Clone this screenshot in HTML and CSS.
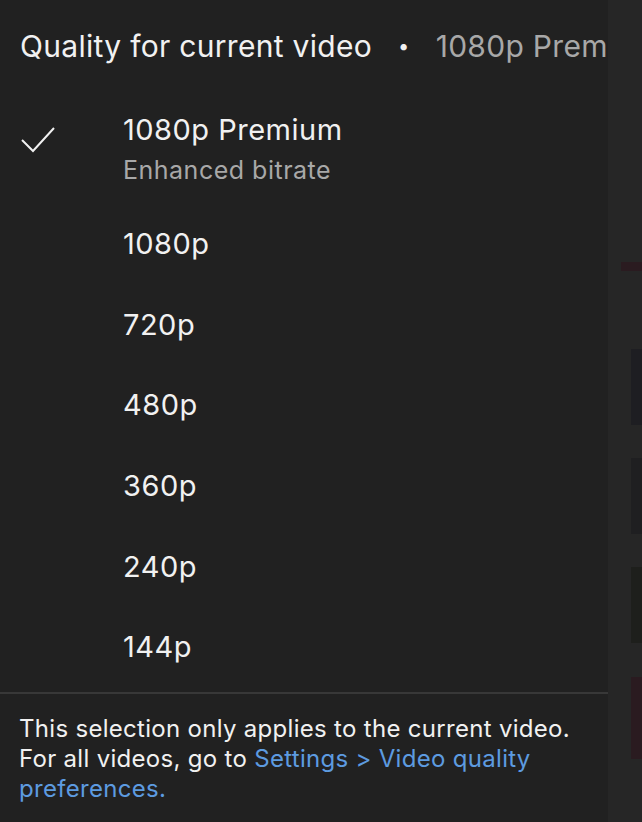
FILE: index.html
```html
<!DOCTYPE html>
<html lang="en">
<head>
    <meta charset="UTF-8">
    <meta name="viewport" content="width=device-width, initial-scale=1.0">
    <title>Quality for current video</title>
    <link rel="stylesheet" href="styles.css">
</head>
<body>

    <div class="sheet">
        <div class="header">
            <span class="header-title">Quality for current video</span>
            <span class="header-dot">&bull;</span>
            <span class="header-current">1080p Premium</span>
        </div>

        <ul class="options">
            <li class="option option-premium">
                <svg class="check" viewBox="0 0 34 28" width="34" height="28">
                    <path d="M1 14 L12 25 L33 2" fill="none" stroke="#f1f1f1" stroke-width="2"/>
                </svg>
                <div class="option-text">
                    <span class="option-label">1080p Premium</span>
                    <span class="option-sub">Enhanced bitrate</span>
                </div>
            </li>
            <li class="option"><span class="option-label">1080p</span></li>
            <li class="option"><span class="option-label">720p</span></li>
            <li class="option"><span class="option-label">480p</span></li>
            <li class="option"><span class="option-label">360p</span></li>
            <li class="option"><span class="option-label">240p</span></li>
            <li class="option"><span class="option-label">144p</span></li>
        </ul>

        <div class="note">
            <p>This selection only applies to the current video. For all videos, go to <a href="#">Settings &gt; Video quality preferences.</a></p>
        </div>
    </div>

    <!-- pedaco da pagina atras do painel -->
    <div class="backdrop">
        <div class="thumb thumb-red thumb-top"></div>
        <div class="thumb thumb-a"></div>
        <div class="thumb thumb-b"></div>
        <div class="thumb thumb-c"></div>
        <div class="thumb thumb-red thumb-d"></div>
    </div>

</body>
</html>
```

FILE: styles.css
```css
* {
    margin: 0;
    padding: 0;
    box-sizing: border-box;
}

html, body {
    height: 100%;
}

body {
    display: flex;
    background-color: #262626;
    font-family: Inter, "Noto Sans", sans-serif;
    color: #f1f1f1;
    overflow: hidden;
}

.sheet {
    width: 608px;
    height: 100%;
    background-color: #212121;
    display: flex;
    flex-direction: column;
}

.header {
    height: 92px;
    display: flex;
    align-items: center;
    padding-left: 20px;
    white-space: nowrap;
    overflow: hidden;
    font-size: 30px;
    letter-spacing: 0.3px;
}

.header-title {
    color: #f1f1f1;
}

.header-dot {
    font-size: 20px;
    margin: 0 26px 0 26px;
}

.header-current {
    color: #a8a8a8;
}

.options {
    list-style: none;
}

.option {
    height: 80.6px;
    display: flex;
    align-items: center;
    padding-left: 123px;
}

.option-premium {
    position: relative;
    height: 112px;
    align-items: flex-start;
    padding-top: 20px;
}

.check {
    position: absolute;
    left: 21px;
    top: 34px;
}

.option-text {
    display: flex;
    flex-direction: column;
}

.option-label {
    font-size: 29px;
    line-height: 36px;
    letter-spacing: 0.5px;
}

.option-sub {
    font-size: 25px;
    line-height: 45px;
    letter-spacing: 0.5px;
    color: #a8a8a8;
}

.note {
    margin-top: 4px;
    border-top: 2px solid #383838;
    padding: 20px 0 0 19px;
    font-size: 24px;
    line-height: 30px;
    letter-spacing: 0.3px;
}

.note p {
    width: 570px;
}

.note a {
    color: #5d9be0;
    text-decoration: none;
}

.backdrop {
    flex: 1;
    display: flex;
    flex-direction: column;
    align-items: flex-end;
}

.thumb {
    width: 11px;
    background-color: #1f1f21;
}

.thumb-red {
    background-color: #2a1b20;
}

.thumb-top {
    width: 21px;
    height: 9px;
    margin-top: 262px;
}

.thumb-a {
    height: 76px;
    margin-top: 78px;
    background-color: #1e1e22;
}

.thumb-b {
    height: 76px;
    margin-top: 33px;
}

.thumb-c {
    height: 76px;
    margin-top: 33px;
    background-color: #1e1f1c;
}

.thumb-d {
    height: 82px;
    margin-top: 34px;
}
```
